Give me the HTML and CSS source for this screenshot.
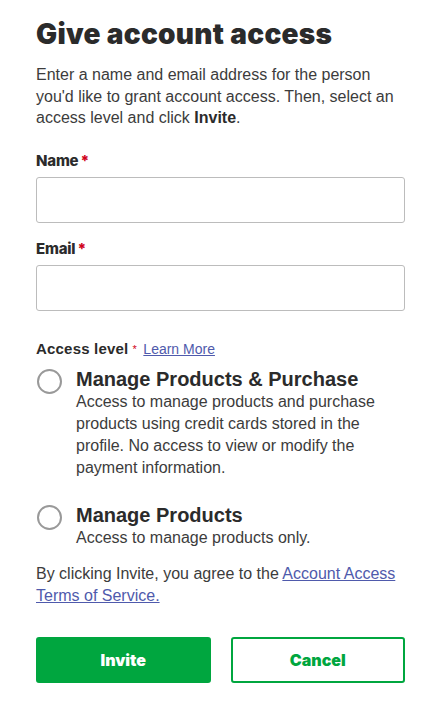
FILE: index.html
```html
<!DOCTYPE html>
<html lang="en">
<head>
    <meta charset="UTF-8">
    <meta name="viewport" content="width=device-width, initial-scale=1.0">
    <title>Give account access</title>
    <link rel="stylesheet" href="styles.css">
</head>
<body>
    <div class="panel">
        <h1>Give account access</h1>
        <p class="intro">Enter a name and email address for the person you'd like to grant account access. Then, select an access level and click <strong>Invite</strong>.</p>

        <div class="field">
            <label class="field-label" for="name">Name<span class="req">*</span></label>
            <input type="text" id="name" class="text-input">
        </div>

        <div class="field">
            <label class="field-label" for="email">Email<span class="req">*</span></label>
            <input type="email" id="email" class="text-input">
        </div>

        <div class="access">
            <div class="access-label">Access level<span class="req-small">*</span> <a href="#">Learn More</a></div>

            <label class="option">
                <span class="radio"></span>
                <span class="option-text">
                    <span class="option-title">Manage Products &amp; Purchase</span>
                    <span class="option-desc">Access to manage products and purchase products using credit cards stored in the profile. No access to view or modify the payment information.</span>
                </span>
            </label>

            <label class="option">
                <span class="radio"></span>
                <span class="option-text">
                    <span class="option-title">Manage Products</span>
                    <span class="option-desc">Access to manage products only.</span>
                </span>
            </label>
        </div>

        <p class="terms">By clicking Invite, you agree to the <a href="#">Account Access Terms of Service.</a></p>

        <div class="actions">
            <button class="btn btn-primary">Invite</button>
            <button class="btn btn-secondary">Cancel</button>
        </div>
    </div>
</body>
</html>
```

FILE: styles.css
```css
html, body {
    margin: 0;
    padding: 0;
    background-color: #ffffff;
}

body {
    font-family: "Liberation Sans", Arial, sans-serif;
    color: #2b2b2b;
}

.panel {
    padding: 16px 36px 30px;
}

h1 {
    font-family: Inter, sans-serif;
    font-weight: 900;
    font-size: 28px;
    letter-spacing: 0.3px;
    color: #2b2b2b;
    margin: 0 0 12px;
    line-height: 36px;
}

.intro {
    font-size: 16px;
    line-height: 21.5px;
    color: #3c3c3c;
    margin: 0 0 22px;
}

.intro strong {
    color: #2b2b2b;
}

.field {
    margin-bottom: 16px;
}

.field-label {
    display: block;
    font-family: Inter, sans-serif;
    font-weight: 800;
    font-size: 15px;
    letter-spacing: -0.2px;
    line-height: 20px;
    margin-bottom: 6px;
}

.req {
    color: #d0021b;
    margin-left: 2px;
}

.text-input {
    display: block;
    box-sizing: border-box;
    width: 100%;
    height: 46px;
    border: 1px solid #bcbcbc;
    border-radius: 3px;
    background: #fff;
    font-size: 16px;
    padding: 0 10px;
}

.access {
    margin-top: 28px;
}

.access-label {
    font-weight: 700;
    font-size: 15px;
    line-height: 20px;
    letter-spacing: 0.2px;
}

.req-small {
    color: #d0021b;
    font-weight: 400;
    font-size: 11px;
    vertical-align: top;
    margin-left: 4px;
    margin-right: 2px;
}

.access-label a {
    font-weight: 400;
    font-size: 14px;
    letter-spacing: 0;
    color: #4f5aac;
}

.option {
    display: flex;
    gap: 14px;
    margin-top: 8px;
    margin-bottom: 24px;
    cursor: pointer;
}

.radio {
    flex: none;
    box-sizing: border-box;
    width: 25px;
    height: 25px;
    border: 2px solid #999;
    border-radius: 50%;
    margin-top: 2px;
    margin-left: 1px;
}

.option-text {
    display: flex;
    flex-direction: column;
}

.option-title {
    font-weight: 700;
    font-size: 20px;
    line-height: 24px;
    color: #2b2b2b;
}

.option-desc {
    font-size: 16px;
    line-height: 22px;
    color: #3c3c3c;
}

.terms {
    font-size: 16px;
    line-height: 22px;
    color: #3c3c3c;
    margin: -10px 0 30px;
}

.terms a {
    color: #4f5aac;
}

.actions {
    display: flex;
    gap: 20px;
}

.btn {
    flex: 1;
    height: 46px;
    border-radius: 3px;
    font-family: Inter, sans-serif;
    font-weight: 900;
    font-size: 16px;
    cursor: pointer;
}

.btn-primary {
    background-color: #00a63f;
    border: 2px solid #00a63f;
    color: #ffffff;
}

.btn-secondary {
    background-color: #ffffff;
    border: 2px solid #00a63f;
    color: #00a63f;
}
```
